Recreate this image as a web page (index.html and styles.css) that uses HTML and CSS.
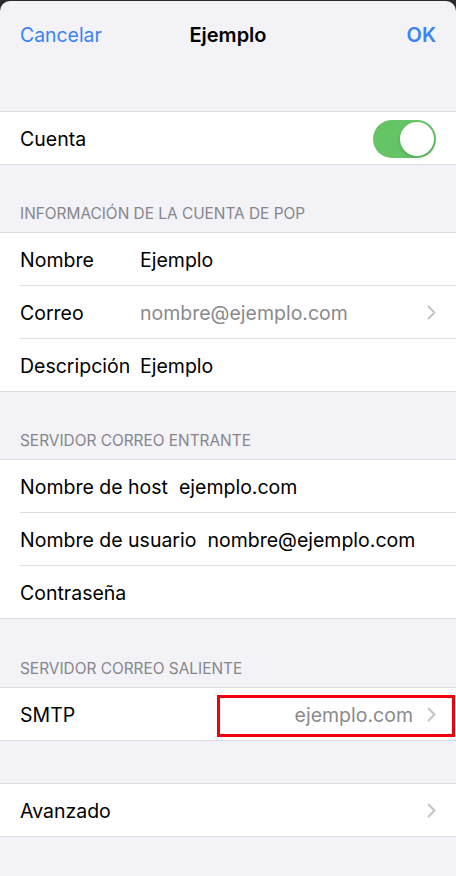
FILE: index.html
```html
<!DOCTYPE html>
<html lang="es">
<head>
    <meta charset="UTF-8">
    <meta name="viewport" content="width=device-width, initial-scale=1.0">
    <title>Ejemplo</title>
    <link rel="stylesheet" href="styles.css">
</head>
<body>
    <div class="sheet">
        <header class="nav">
            <span class="nav-btn">Cancelar</span>
            <span class="nav-title">Ejemplo</span>
            <span class="nav-btn nav-ok">OK</span>
        </header>

        <div class="spacer"></div>
        <div class="group">
            <div class="row">
                <span class="label">Cuenta</span>
                <span class="switch"><span class="knob"></span></span>
            </div>
        </div>

        <div class="section-title">INFORMACIÓN DE LA CUENTA DE POP</div>
        <div class="group pop">
            <div class="row">
                <span class="label">Nombre</span>
                <span class="value">Ejemplo</span>
            </div>
            <div class="row">
                <span class="label">Correo</span>
                <span class="value muted">nombre@ejemplo.com</span>
                <svg class="chevron" viewBox="0 0 9 15"><path d="M1.5 1.5 L7.5 7.5 L1.5 13.5"/></svg>
            </div>
            <div class="row">
                <span class="label">Descripción</span>
                <span class="value">Ejemplo</span>
            </div>
        </div>

        <div class="section-title">SERVIDOR CORREO ENTRANTE</div>
        <div class="group">
            <div class="row">
                <span class="label">Nombre de host</span>
                <span class="value">ejemplo.com</span>
            </div>
            <div class="row">
                <span class="label">Nombre de usuario</span>
                <span class="value">nombre@ejemplo.com</span>
            </div>
            <div class="row">
                <span class="label">Contraseña</span>
            </div>
        </div>

        <div class="section-title last">SERVIDOR CORREO SALIENTE</div>
        <div class="group">
            <div class="row">
                <span class="label">SMTP</span>
                <span class="value muted right">ejemplo.com</span>
                <svg class="chevron" viewBox="0 0 9 15"><path d="M1.5 1.5 L7.5 7.5 L1.5 13.5"/></svg>
                <span class="highlight"></span>
            </div>
        </div>

        <div class="spacer"></div>
        <div class="group">
            <div class="row">
                <span class="label">Avanzado</span>
                <span class="value"></span>
                <svg class="chevron" viewBox="0 0 9 15"><path d="M1.5 1.5 L7.5 7.5 L1.5 13.5"/></svg>
            </div>
        </div>
    </div>
</body>
</html>
```

FILE: styles.css
```css
* {
    box-sizing: border-box;
}

html, body {
    height: 100%;
}

body {
    margin: 0;
    background-color: #2b2b2d;
    font-family: "Inter", "Noto Sans", sans-serif;
    color: #000;
    overflow: hidden;
}

.sheet {
    margin-top: 1px;
    min-height: 100%;
    background-color: #f2f2f7;
    border-radius: 10px 10px 0 0;
}

/* Верхняя панель */
.nav {
    height: 68px;
    display: flex;
    align-items: center;
    justify-content: space-between;
    padding: 0 20px;
    position: relative;
    font-size: 19.4px;
}

.nav-btn {
    color: #3a82f7;
}

.nav-ok {
    font-weight: 600;
    font-size: 20px;
}

.nav-title {
    position: absolute;
    left: 0;
    right: 0;
    text-align: center;
    font-weight: 600;
    font-size: 20px;
    pointer-events: none;
}

.spacer {
    height: 42px;
}

.section-title {
    padding: 39px 20px 8px;
    line-height: 20px;
    font-size: 15.4px;
    color: #86868b;
}

.section-title.last {
    padding-top: 40px;
}

/* Группы строк */
.group {
    background-color: #fff;
    border-top: 1px solid #dcdce0;
    border-bottom: 1px solid #dcdce0;
    padding-left: 20px;
}

.row {
    display: flex;
    align-items: center;
    height: 53px;
    padding-right: 20px;
    padding-top: 1px;
    border-bottom: 1px solid #dcdce0;
    font-size: 19.5px;
    position: relative;
}

.row:last-child {
    height: 52px;
    border-bottom: none;
}

.label {
    white-space: nowrap;
}

.pop .label {
    width: 120px;
}

.value {
    flex: 1;
    margin-left: 11px;
    white-space: nowrap;
}

.pop .value {
    margin-left: 0;
}

.muted {
    color: #8a8a8e;
}

.right {
    text-align: right;
}

.chevron {
    width: 9px;
    height: 15px;
    margin-left: 14px;
    fill: none;
    stroke: #c4c4c7;
    stroke-width: 2;
    stroke-linecap: round;
    stroke-linejoin: round;
}

.switch {
    margin-left: auto;
    width: 63px;
    height: 38px;
    border-radius: 19px;
    background-color: #65c466;
    padding: 2px;
    display: flex;
    justify-content: flex-end;
}

.knob {
    width: 34px;
    height: 34px;
    border-radius: 50%;
    background-color: #fff;
    box-shadow: 0 2px 4px rgba(0, 0, 0, 0.15);
}

/* Красная рамка вокруг SMTP */
.highlight {
    position: absolute;
    left: 197px;
    right: 1px;
    top: 7px;
    bottom: 3px;
    border: 3px solid #f0000a;
}
```
